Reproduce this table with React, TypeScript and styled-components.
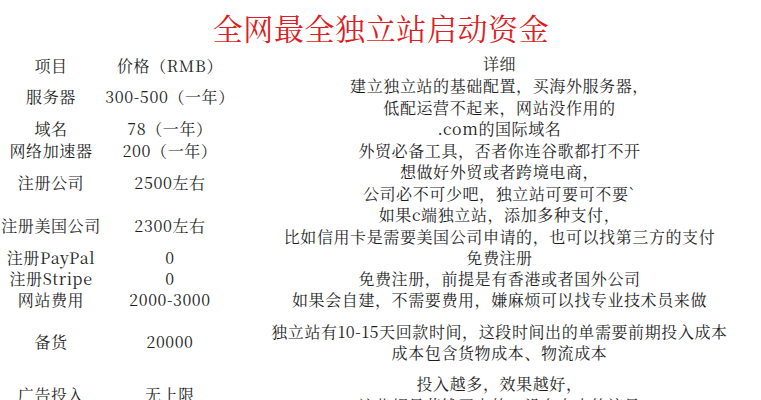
import React from "react";
import styled, { createGlobalStyle } from "styled-components";

const Global = createGlobalStyle`
  html, body { margin: 0; padding: 0; background: #ffffff; overflow: hidden; }
  body { width: 761px; height: 400px; }
`;

const Page = styled.div`
  width: 761px;
  height: 400px;
  overflow: hidden;
  background: #fff;
  font-family: "Noto Serif CJK SC", "Noto Sans CJK SC", "Liberation Serif", serif;
  color: #1e1e1e;
  display: flex;
  flex-direction: column;
`;

const Title = styled.h1`
  margin: 0;
  height: 52px;
  display: flex;
  align-items: center;
  justify-content: center;
  padding-top: 2px;
  padding-left: 1px;
  box-sizing: border-box;
  font-size: 30px;
  font-weight: 400;
  letter-spacing: 0.6px;
  color: #dc1f26;
  flex-shrink: 0;
`;

const Table = styled.div`
  display: grid;
  grid-template-columns: 102px 136px 523px;
  flex-shrink: 0;
`;

const Cell = styled.div<{ $h: number; $top?: number }>`
  height: ${(p) => p.$h}px;
  padding-top: ${(p) => p.$top || 0}px;
  box-sizing: border-box;
  display: flex;
  flex-direction: column;
  align-items: center;
  justify-content: center;
  font-size: 16px;
  letter-spacing: 0.6px;
  line-height: 21.5px;
  white-space: nowrap;
`;

const Line = styled.span`
  display: block;
`;

const RowGroup = styled.div`
  display: contents;
`;

type Row = { name: string; price: string; lines: string[]; h: number; top?: number };

const rows: Row[] = [
  { name: "项目", price: "价格（RMB）", lines: ["详细"], h: 23, top: 5 },
  {
    name: "服务器",
    price: "300-500（一年）",
    lines: ["建立独立站的基础配置，买海外服务器，", "低配运营不起来，网站没作用的"],
    h: 43,
  },
  { name: "域名", price: "78（一年）", lines: [".com的国际域名"], h: 22 },
  { name: "网络加速器", price: "200（一年）", lines: ["外贸必备工具，否者你连谷歌都打不开"], h: 21 },
  {
    name: "注册公司",
    price: "2500左右",
    lines: ["想做好外贸或者跨境电商，", "公司必不可少吧，独立站可要可不要`"],
    h: 43,
  },
  {
    name: "注册美国公司",
    price: "2300左右",
    lines: ["如果c端独立站，添加多种支付，", "比如信用卡是需要美国公司申请的，也可以找第三方的支付"],
    h: 43,
  },
  { name: "注册PayPal", price: "0", lines: ["免费注册"], h: 21 },
  { name: "注册Stripe", price: "0", lines: ["免费注册，前提是有香港或者国外公司"], h: 21 },
  { name: "网站费用", price: "2000-3000", lines: ["如果会自建，不需要费用，嫌麻烦可以找专业技术员来做"], h: 22 },
  {
    name: "备货",
    price: "20000",
    lines: ["独立站有10-15天回款时间，这段时间出的单需要前期投入成本", "成本包含货物成本、物流成本"],
    h: 62,
  },
  {
    name: "广告投入",
    price: "无上限",
    lines: ["投入越多，效果越好，", "这些都是花钱买来的，没有白来的流量"],
    h: 43,
  },
];

export default function App() {
  return (
    <Page>
      <Global />
      <Title>全网最全独立站启动资金</Title>
      <Table>
        {rows.map((r, i) => (
          <RowGroup key={i}>
            <Cell $h={r.h} $top={r.top}>{r.name}</Cell>
            <Cell $h={r.h} $top={r.top}>{r.price}</Cell>
            <Cell $h={r.h}>
              {r.lines.map((l, j) => (
                <Line key={j}>{l}</Line>
              ))}
            </Cell>
          </RowGroup>
        ))}
      </Table>
    </Page>
  );
}
